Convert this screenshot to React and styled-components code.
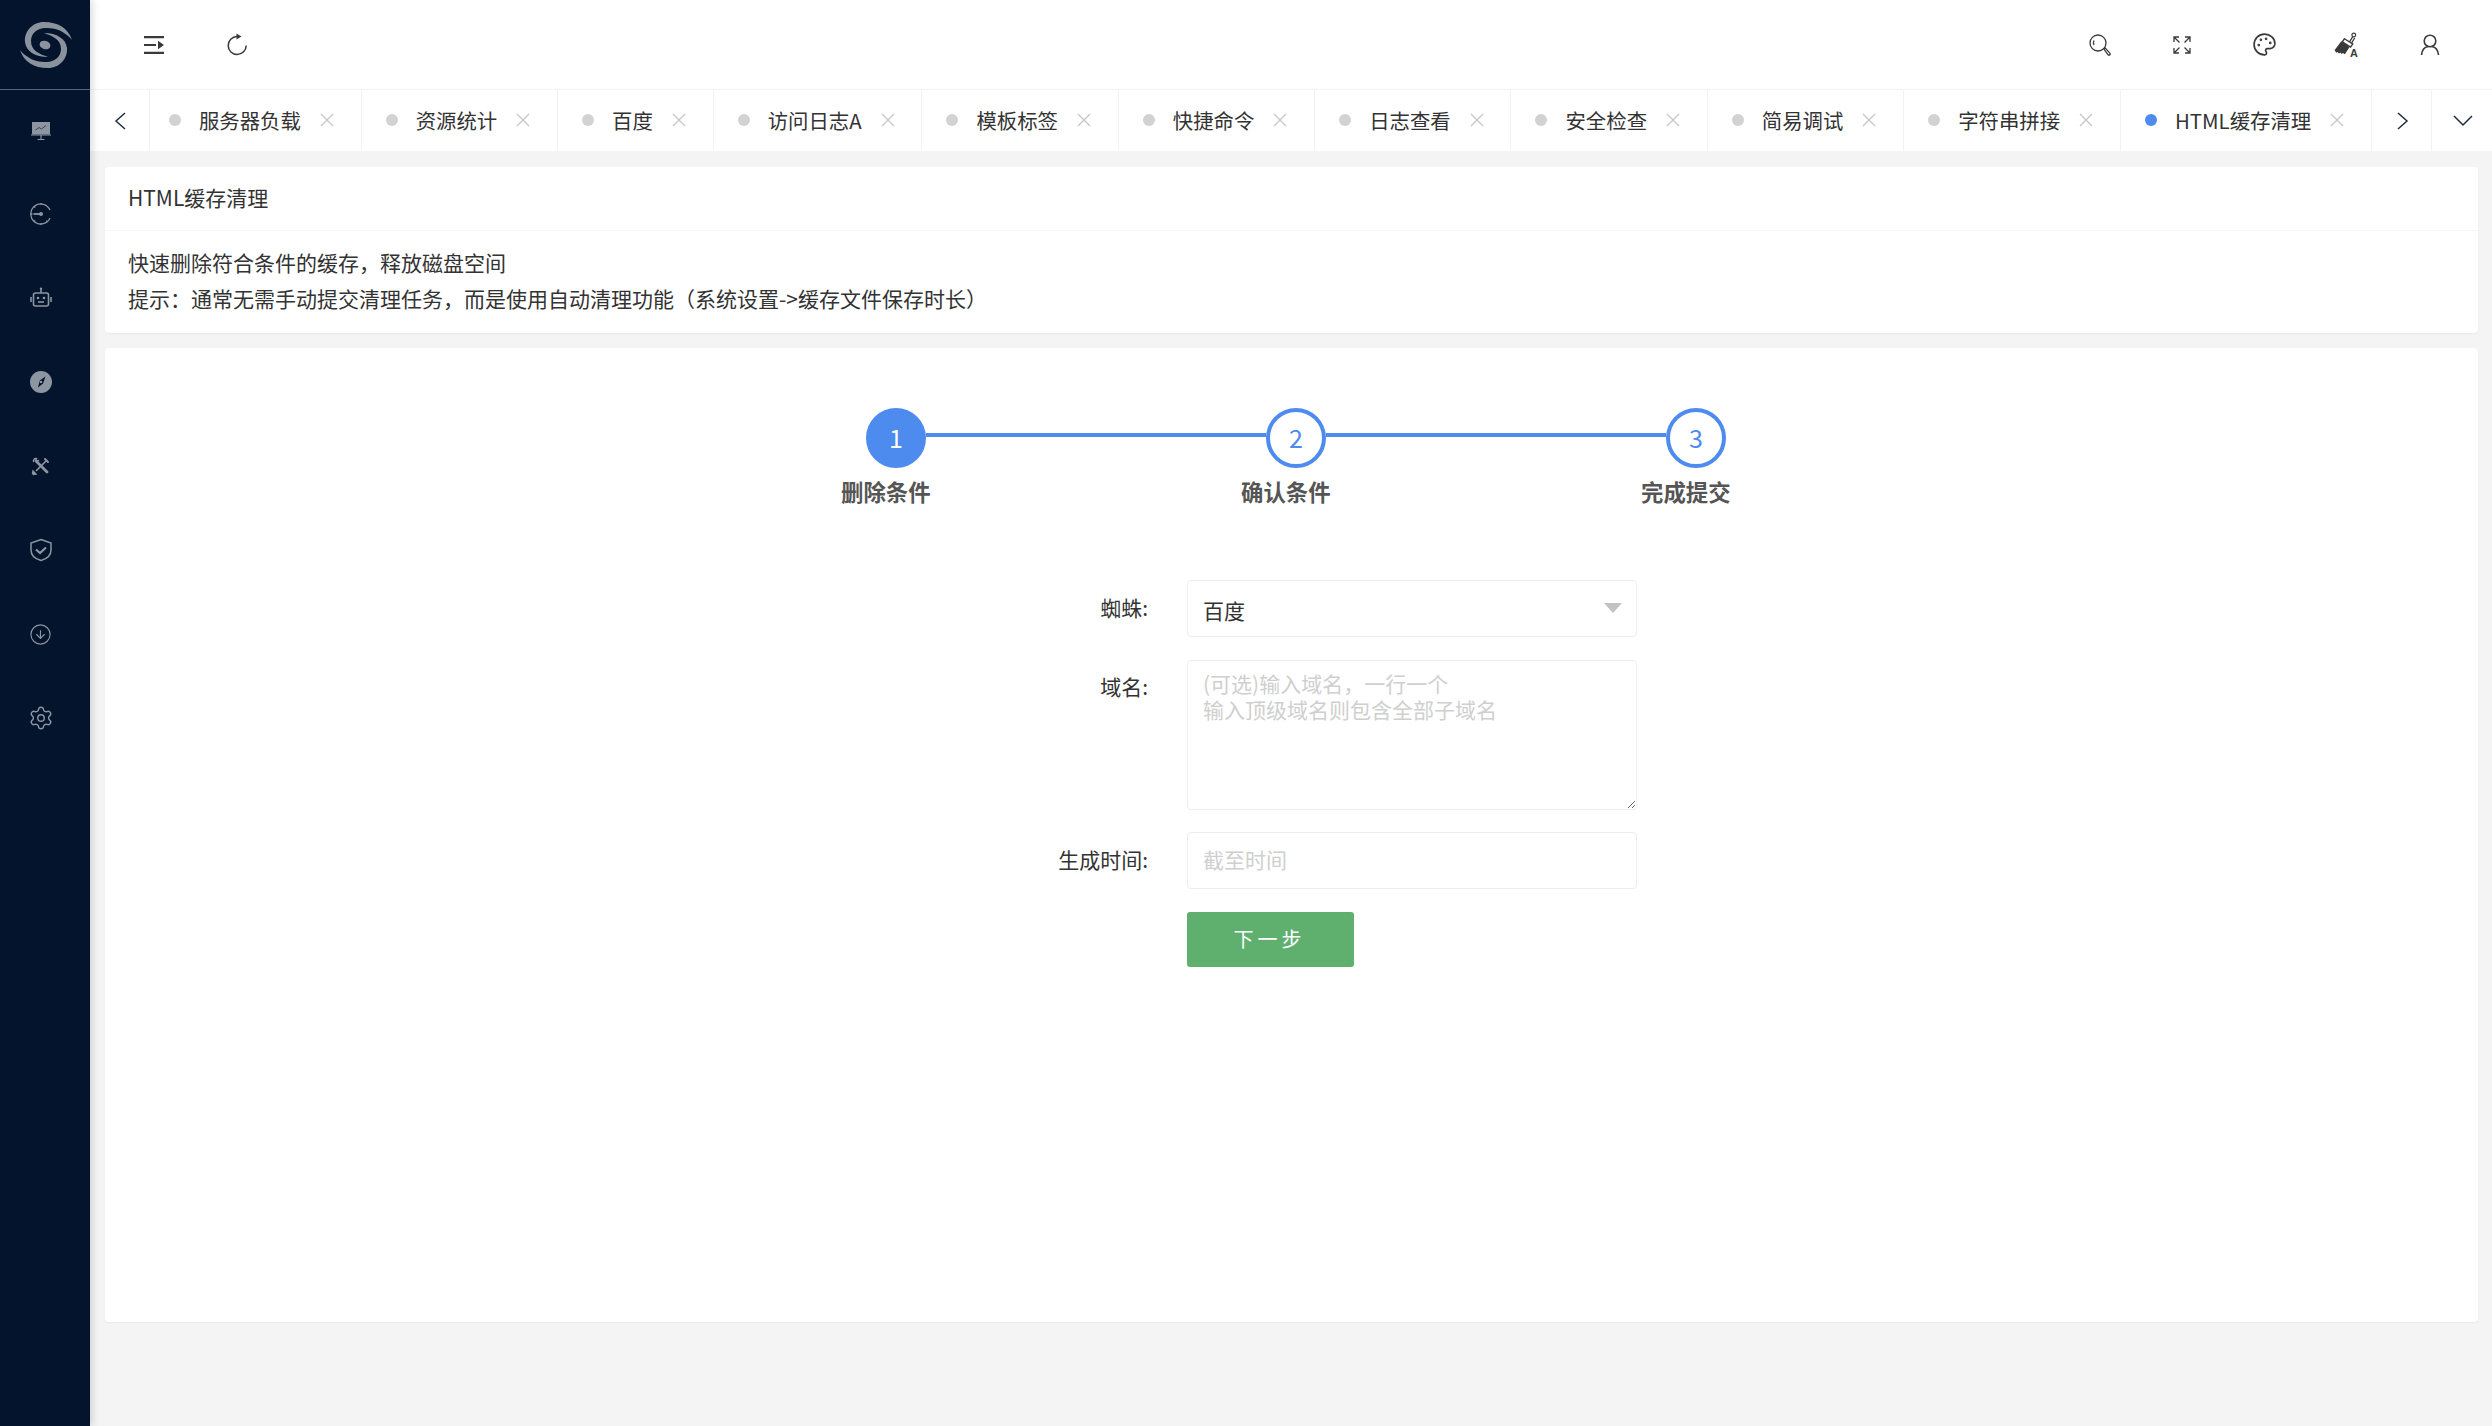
import React from 'react'
import styled, { createGlobalStyle } from 'styled-components'
import { CircleArrowDown, Settings, Palette } from 'lucide-react'

const GlobalStyle = createGlobalStyle`
  html, body {
    margin: 0;
    padding: 0;
    background: #f4f4f4;
    font-family: "Noto Sans CJK SC", "Noto Sans", sans-serif;
    color: #333;
  }
  * { box-sizing: border-box; }
`

const tabs = ['服务器负载', '资源统计', '百度', '访问日志A', '模板标签', '快捷命令', '日志查看', '安全检查', '简易调试', '字符串拼接', 'HTML缓存清理']

const Layout = styled.div`
  display: flex;
  width: 2492px;
  height: 1426px;
  overflow: hidden;
`

const Sidebar = styled.aside`
  position: relative;
  z-index: 2;
  flex: 0 0 90px;
  background: #03142c;
  box-shadow: 2px 0 8px rgba(0, 0, 0, 0.16);
`

const LogoBox = styled.div`
  display: flex;
  align-items: center;
  justify-content: center;
  height: 90px;
  padding-left: 1px;
  border-bottom: 1px solid #5a6676;
  color: #8a929e;
`

const SideMenu = styled.nav`
  display: flex;
  flex-direction: column;
  gap: 4px;
  padding-right: 9px;
  color: #8d95a1;
`

const SideItem = styled.div`
  display: flex;
  align-items: center;
  justify-content: center;
  height: 80px;
`

const Main = styled.main`
  flex: 1;
  min-width: 0;
  display: flex;
  flex-direction: column;
`

const Header = styled.header`
  display: flex;
  align-items: center;
  justify-content: space-between;
  height: 90px;
  padding: 0 21px 0 23px;
  background: #fff;
  border-bottom: 1px solid #f3f3f3;
  color: #3a3a3a;
`

const HeaderGroup = styled.div`
  display: flex;
  align-items: center;
`

const HeaderBtn = styled.div`
  display: flex;
  align-items: center;
  justify-content: center;
  width: 82.5px;
  height: 56px;
`

const TabBar = styled.div`
  display: flex;
  height: 61px;
  background: #fff;
`

const ArrowCell = styled.div`
  flex: 0 0 60px;
  display: flex;
  align-items: center;
  justify-content: center;
  padding-left: ${p => p.$shift || 0}px;
  color: #1f2d3d;
  border-right: ${p => (p.$last ? 'none' : '1px solid #f2f2f2')};
`

const TabList = styled.div`
  flex: 1;
  min-width: 0;
  display: flex;
  justify-content: flex-end;
  overflow: hidden;
`

const Tab = styled.div`
  flex: 0 0 auto;
  display: flex;
  align-items: center;
  padding: 0 26.8px 1px 24px;
  border-right: 1px solid #f2f2f2;
  font-size: 20.4px;
  color: #333;
  white-space: nowrap;
`

const TabDot = styled.span`
  width: 12px;
  height: 12px;
  margin-right: 18px;
  border-radius: 50%;
  background: ${p => (p.$active ? '#4d8bee' : '#d2d2d2')};
`

const TabClose = styled.svg`
  width: 14px;
  height: 14px;
  margin-left: 19px;
  stroke: #c6c6c6;
  stroke-width: 1.3;
  fill: none;
`

const Content = styled.div`
  flex: 1;
  display: flex;
  flex-direction: column;
  gap: 15px;
  padding: 16px 14px 104px 15px;
`

const Card = styled.section`
  background: #fff;
  border-radius: 4px;
  box-shadow: 0 1px 2px rgba(0, 0, 0, 0.05);
`

const CardTitle = styled.div`
  height: 64px;
  padding: 0 23px;
  line-height: 60px;
  font-size: 21px;
  border-bottom: 1px solid #f6f6f6;
`

const CardBody = styled.div`
  padding: 12.5px 23px 17.5px;
  font-size: 21px;
  line-height: 36px;
`

const WizardCard = styled(Card)`
  flex: 1;
  padding-top: 60px;
`

const Steps = styled.div`
  width: 890px;
  margin-left: 736px;
`

const StepTrack = styled.div`
  display: flex;
  align-items: center;
  padding-left: 25px;
`

const StepCircle = styled.div`
  flex: 0 0 60px;
  height: 60px;
  padding-bottom: 2px;
  display: flex;
  align-items: center;
  justify-content: center;
  border: 4px solid #4d8bee;
  border-radius: 50%;
  background: ${p => (p.$done ? '#4d8bee' : '#fff')};
  color: ${p => (p.$done ? '#fff' : '#4d8bee')};
  font-size: 25px;
  line-height: 1;
`

const StepLine = styled.div`
  flex: 0 0 340px;
  height: 4px;
  margin-bottom: 6px;
  background: #4d8bee;
`

const StepLabels = styled.div`
  display: grid;
  grid-template-columns: 400px 400px 90px;
  margin-top: 7px;
`

const StepLabel = styled.div`
  font-size: 22.4px;
  line-height: 32px;
  font-weight: 700;
  color: #555;
  white-space: nowrap;
`

const Form = styled.form`
  display: grid;
  grid-template-columns: 140px 450px;
  column-gap: 39px;
  row-gap: 22.5px;
  margin: 73px 0 0 903px;
`

const FieldLabel = styled.label`
  padding-top: ${p => p.$top || 12}px;
  text-align: right;
  font-size: 21px;
  line-height: 30px;
  color: #333;
`

const fieldBox = `
  width: 450px;
  border: 1.5px solid #eeeeee;
  border-radius: 4px;
  background: #fff;
  font-family: inherit;
  font-size: 21px;
  color: #333;
  outline: none;
`

const SelectBox = styled.div`
  ${fieldBox}
  display: flex;
  align-items: center;
  justify-content: space-between;
  height: 57px;
  padding: 2px 14px 0 15px;
`

const Caret = styled.span`
  width: 0;
  height: 0;
  margin-top: -4px;
  border-left: 9px solid transparent;
  border-right: 9px solid transparent;
  border-top: 10px solid #c2c2c2;
`

const TextArea = styled.textarea`
  ${fieldBox}
  display: block;
  height: 150px;
  padding: 9px 15px;
  line-height: 26px;
  &::placeholder { color: #cfcfcf; opacity: 1; }
`

const TextInput = styled.input`
  ${fieldBox}
  display: block;
  height: 57px;
  padding: 0 15px 3px;
  &::placeholder { color: #cfcfcf; opacity: 1; }
`

const NextButton = styled.button`
  grid-column: 2;
  width: 167px;
  height: 55px;
  padding: 0 2px 2px 0;
  border: none;
  border-radius: 3px;
  background: #5fb06f;
  color: #fff;
  font-family: inherit;
  font-size: 20px;
  letter-spacing: 4px;
`

// logo and icons that the icon packages do not have
const Logo = () => (
  <svg width="54" height="50" viewBox="-27 -25 54 50" fill="currentColor">
    <path d="M26 -5C22 -17 12 -23 -2 -23C-14 -23 -22 -13 -21 -3C-20 6 -11 12 2 12C-6 9 -15 6 -15 -4C-15 -12 -8 -17 -1 -17C6 -17 13 -16 18 -12C21 -10 24 -8 26 -5Z" />
    <path d="M-26 5C-22 17 -12 23 2 23C14 23 22 13 21 3C20 -6 11 -12 -2 -12C6 -9 15 -6 15 4C15 12 8 17 1 17C-6 17 -13 16 -18 12C-21 10 -24 8 -26 5Z" />
    <ellipse cx="-1" cy="0" rx="5.5" ry="4.2" transform="rotate(15 -1 0)" />
  </svg>
)

const BoardIcon = () => (
  <svg width="24" height="24" viewBox="0 0 24 24">
    <path d="M3 4h18v12.500H3z" fill="currentColor" />
    <path d="M2 17h20M12 17.500v3.500M8.500 21.500h7" stroke="currentColor" strokeWidth="1.2" fill="none" />
    <path d="M6.500 12l3.500-2.500 2.500 1.500 4.500-3.500" stroke="#3b4656" strokeWidth="1" fill="none" />
  </svg>
)

const GaugeIcon = () => (
  <svg width="24" height="24" viewBox="0 0 24 24" fill="none" stroke="currentColor" strokeWidth="1.3">
    <path d="M21 8A10 10 0 1 0 21 16" />
    <path d="M12 1v2M5 4l1.200 1.500M1.500 12h2M5 20l1.200-1.500M12 23v-2M18.500 20l-1-1.500" />
    <circle cx="12" cy="12" r="2" fill="currentColor" stroke="none" />
    <path d="M4.500 12H12" strokeWidth="1.8" />
  </svg>
)

const RobotIcon = () => (
  <svg width="24" height="24" viewBox="0 0 24 24" fill="none" stroke="currentColor" strokeWidth="1.6">
    <rect x="4.500" y="7" width="15" height="13" rx="2" />
    <path d="M12 3.500V7M2 11v5M22 11v5" />
    <circle cx="12" cy="2.800" r="1.200" fill="currentColor" stroke="none" />
    <circle cx="9" cy="12" r="1.300" fill="currentColor" stroke="none" />
    <circle cx="15" cy="12" r="1.300" fill="currentColor" stroke="none" />
    <path d="M9 16h6" />
  </svg>
)

const CompassIcon = () => (
  <svg width="24" height="24" viewBox="0 0 24 24">
    <circle cx="12" cy="12" r="11" fill="currentColor" />
    <path d="M16.500 6.500l-2.500 7-5 4 1.800-7z" fill="#03142c" />
    <circle cx="12" cy="12" r="1.300" fill="currentColor" />
  </svg>
)

const ToolsIcon = () => (
  <svg width="20" height="20" viewBox="0 0 20 20" fill="none" stroke="currentColor" strokeLinecap="round">
    <path d="M5 5l11 11" strokeWidth="2.8" />
    <path d="M15.500 4.500L5.500 14.500" strokeWidth="1.6" />
    <path d="M2 15l3 3-2.500.5L1.500 17.500z" fill="currentColor" strokeWidth="1.4" />
    <path d="M14 3l3 3" strokeWidth="2" />
    <path d="M2.500 5.500C2 4 3.500 2 5.500 2.500L4.500 4.500 5.500 5.500 7.500 4.500" strokeWidth="1.4" />
  </svg>
)

const ShieldIcon = () => (
  <svg width="24" height="24" viewBox="0 0 24 24" fill="none" stroke="currentColor" strokeWidth="1.5">
    <path d="M12 1.500L22 5v7c0 5.500-4.500 9-10 10.500C6.500 21 2 17.500 2 12V5z" />
    <path d="M7 11.500l4 3.500 6-5.500" strokeWidth="2.2" />
  </svg>
)

const MenuIcon = () => (
  <svg width="22" height="20" viewBox="0 0 22 20" fill="currentColor">
    <path d="M1 1h20v2.200H1zM1 16.800h20v2.200H1zM1 8.900h12v2.200H1zM15 5.800l6 4.200-6 4.200z" />
  </svg>
)

const RefreshIcon = () => (
  <svg width="22" height="23" viewBox="0 0 22 23" fill="none" stroke="currentColor" strokeWidth="1.5">
    <path d="M11 3.500A9 9 0 1 0 20.200 12.500" />
    <path d="M10.500 .5l5 3-5 3z" fill="currentColor" stroke="none" />
  </svg>
)

const SearchIcon = () => (
  <svg width="22" height="22" viewBox="0 0 22 22" fill="none" stroke="currentColor" strokeWidth="1.3">
    <circle cx="9" cy="9" r="8" />
    <path d="M5 6.500A5 5 0 0 0 5 11" />
    <path d="M14.800 14.800l1.300-1 4.700 5.300a1 1 0 0 1-1.700 1.700z" />
  </svg>
)

const ExpandIcon = () => (
  <svg width="20" height="20" viewBox="0 0 20 20" fill="none" stroke="currentColor" strokeWidth="1.3">
    <path d="M2 7V2h5M2 2l5.500 5.500M13 2h5v5M18 2l-5.500 5.500M2 13v5h5M2 18l5.500-5.500M18 13v5h-5M18 18l-5.500-5.500" />
  </svg>
)

const BrushIcon = () => (
  <svg width="28" height="26" viewBox="0 0 26 25">
    <circle cx="19.500" cy="3" r="1.800" fill="none" stroke="currentColor" strokeWidth="1.2" />
    <path d="M18.500 4.500l-3 5M20.500 5.500l-3 5" stroke="currentColor" strokeWidth="1.2" />
    <path d="M10.500 6.500l8 5-2 3-8-5z" fill="none" stroke="currentColor" strokeWidth="1.3" />
    <path d="M7.500 9l8 5.500-4.500 7-2-1.200-1 .8-1.500-1.300-1.200.8-1.500-1.400-1 .7L1 17.500z" fill="currentColor" />
    <text x="15.800" y="24.500" fontFamily="Liberation Sans, sans-serif" fontSize="10.5" fontWeight="700" fill="currentColor">A</text>
  </svg>
)

const UserIcon = () => (
  <svg width="20" height="22" viewBox="0 0 20 22" fill="none" stroke="currentColor" strokeWidth="1.6">
    <circle cx="10" cy="7" r="5.800" />
    <path d="M1.500 21C2 16 5 13 8 12.500M18.500 21C18 16 15 13 12 12.500" />
  </svg>
)

const Chevron = ({ d, w, h }) => (
  <svg width={w} height={h} viewBox={`0 0 ${w} ${h}`} fill="none" stroke="currentColor" strokeWidth="1.5">
    <path d={d} />
  </svg>
)

export default function App() {
  return (
    <>
      <GlobalStyle />
      <Layout>
        <Sidebar>
          <LogoBox><Logo /></LogoBox>
          <SideMenu>
            <SideItem><BoardIcon /></SideItem>
            <SideItem><GaugeIcon /></SideItem>
            <SideItem><RobotIcon /></SideItem>
            <SideItem><CompassIcon /></SideItem>
            <SideItem><ToolsIcon /></SideItem>
            <SideItem><ShieldIcon /></SideItem>
            <SideItem><CircleArrowDown size={23} strokeWidth={1.2} /></SideItem>
            <SideItem><Settings size={26} strokeWidth={1.3} /></SideItem>
          </SideMenu>
        </Sidebar>
        <Main>
          <Header>
            <HeaderGroup>
              <HeaderBtn><MenuIcon /></HeaderBtn>
              <HeaderBtn><RefreshIcon /></HeaderBtn>
            </HeaderGroup>
            <HeaderGroup>
              <HeaderBtn><SearchIcon /></HeaderBtn>
              <HeaderBtn><ExpandIcon /></HeaderBtn>
              <HeaderBtn><Palette size={25} strokeWidth={1.6} /></HeaderBtn>
              <HeaderBtn><BrushIcon /></HeaderBtn>
              <HeaderBtn><UserIcon /></HeaderBtn>
            </HeaderGroup>
          </Header>
          <TabBar>
            <ArrowCell><Chevron w={12} h={18} d="M11 1L2 9l9 8" /></ArrowCell>
            <TabList>
              {tabs.map((t, i) => (
                <Tab key={t}>
                  <TabDot $active={i === tabs.length - 1} />
                  {t}
                  <TabClose viewBox="0 0 14 14"><path d="M1 1l12 12M13 1L1 13" /></TabClose>
                </Tab>
              ))}
            </TabList>
            <ArrowCell $shift={2}><Chevron w={12} h={18} d="M1 1l9 8-9 8" /></ArrowCell>
            <ArrowCell $last $shift={2}><Chevron w={20} h={12} d="M1 1l9 9 9-9" /></ArrowCell>
          </TabBar>
          <Content>
            <Card>
              <CardTitle>HTML缓存清理</CardTitle>
              <CardBody>
                <div>快速删除符合条件的缓存，释放磁盘空间</div>
                <div>提示：通常无需手动提交清理任务，而是使用自动清理功能（系统设置-&gt;缓存文件保存时长）</div>
              </CardBody>
            </Card>
            <WizardCard>
              <Steps>
                <StepTrack>
                  <StepCircle $done>1</StepCircle>
                  <StepLine />
                  <StepCircle>2</StepCircle>
                  <StepLine />
                  <StepCircle>3</StepCircle>
                </StepTrack>
                <StepLabels>
                  <StepLabel>删除条件</StepLabel>
                  <StepLabel>确认条件</StepLabel>
                  <StepLabel>完成提交</StepLabel>
                </StepLabels>
              </Steps>
              <Form onSubmit={e => e.preventDefault()}>
                <FieldLabel>蜘蛛:</FieldLabel>
                <SelectBox>百度<Caret /></SelectBox>
                <FieldLabel $top={11}>域名:</FieldLabel>
                <TextArea placeholder={'(可选)输入域名，一行一个\n输入顶级域名则包含全部子域名'} />
                <FieldLabel $top={12}>生成时间:</FieldLabel>
                <TextInput placeholder="截至时间" />
                <NextButton>下一步</NextButton>
              </Form>
            </WizardCard>
          </Content>
        </Main>
      </Layout>
    </>
  )
}
